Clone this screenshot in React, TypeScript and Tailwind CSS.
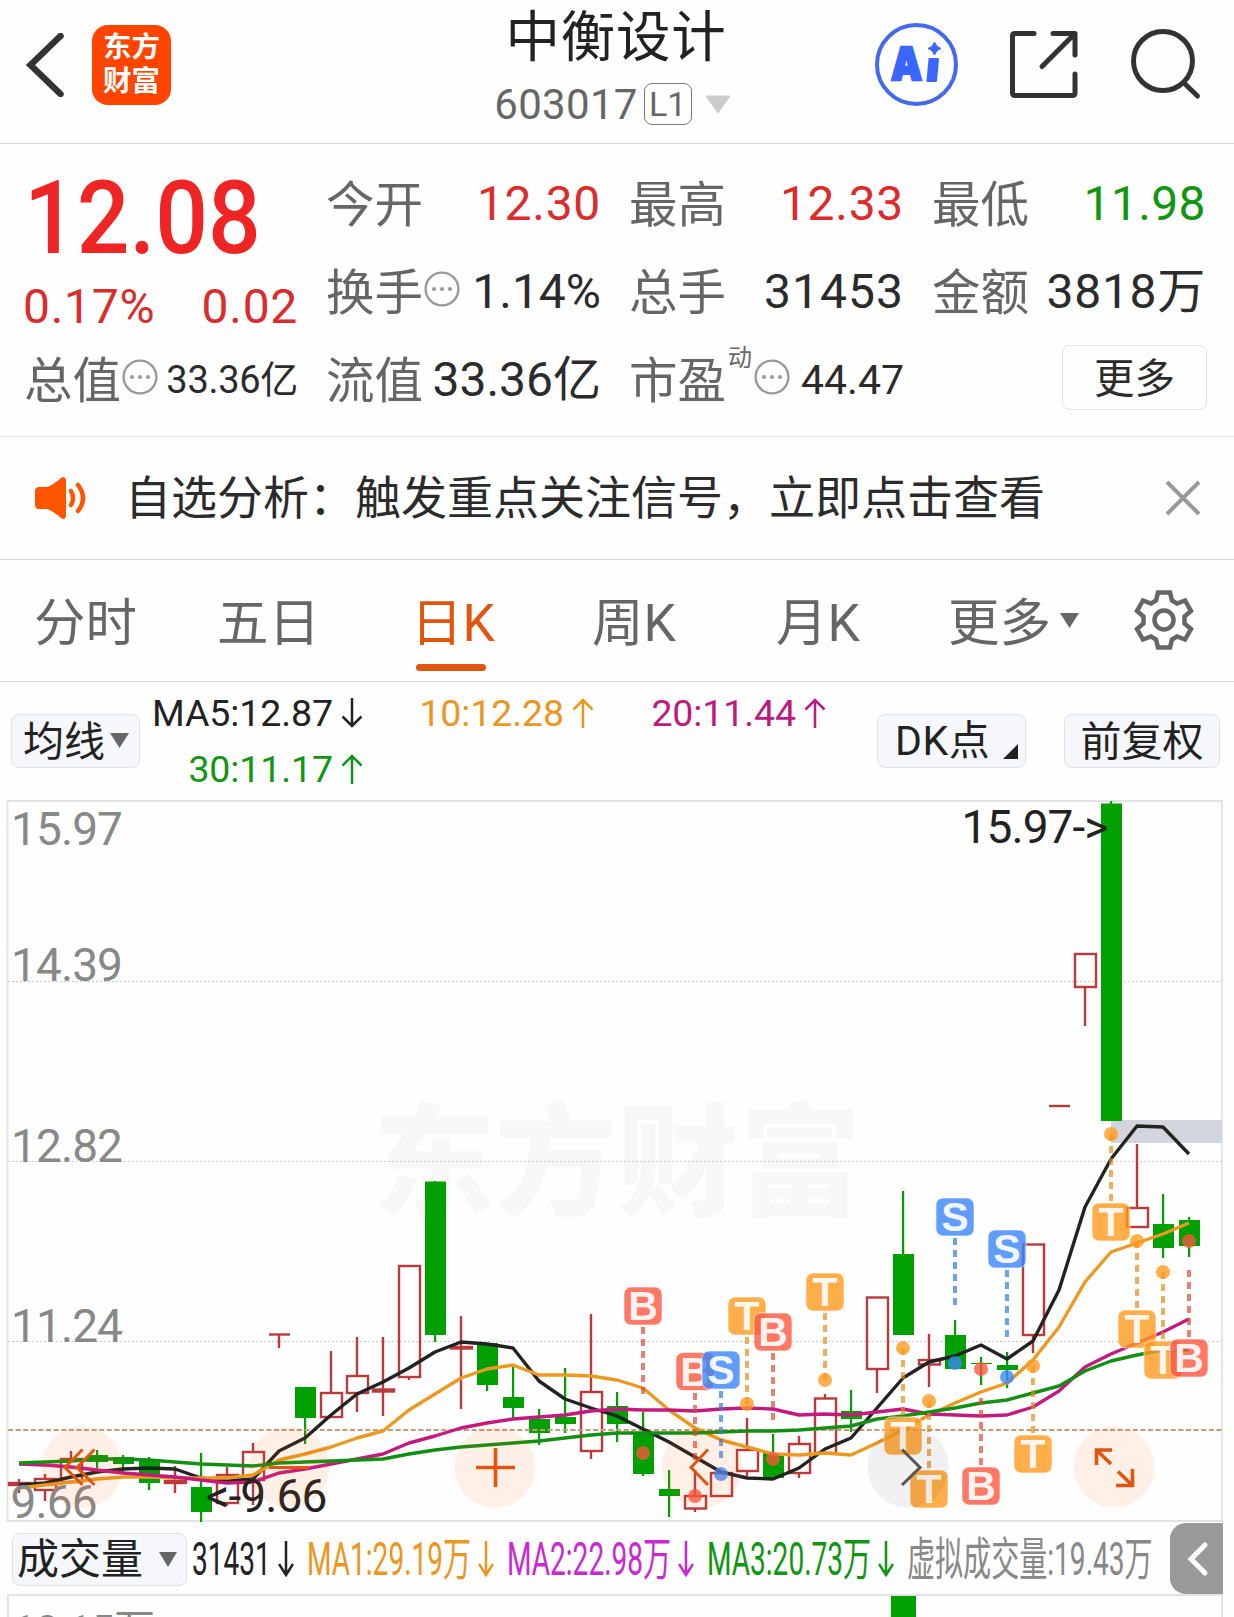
import { clsx } from 'clsx';

type Candle = [kind: 'up' | 'down', high: number, top: number, bottom: number, low: number];

// one entry per trading day, values are y positions on the chart canvas
const CANDLES: Candle[] = [
  ['up', 1479, 1483, 1485, 1493],
  ['up', 1474, 1479, 1490, 1501],
  ['up', 1451, 1459, 1482, 1482],
  ['down', 1450, 1455, 1462, 1468],
  ['down', 1455, 1457, 1464, 1472],
  ['down', 1457, 1459, 1483, 1490],
  ['up', 1466, 1481, 1483, 1493],
  ['down', 1453, 1487, 1512, 1522],
  ['up', 1467, 1475, 1503, 1506],
  ['up', 1443, 1452, 1480, 1505],
  ['up', 1334, 1334.5, 1334.5, 1348],
  ['down', 1387, 1387, 1418, 1444],
  ['up', 1351, 1393, 1417, 1417],
  ['up', 1337, 1376, 1393, 1412],
  ['up', 1337, 1389.5, 1391.5, 1416],
  ['up', 1266, 1266, 1377, 1380],
  ['down', 1181, 1181.5, 1335, 1342],
  ['up', 1316, 1347, 1348.5, 1409],
  ['down', 1343, 1343, 1385, 1391],
  ['down', 1365, 1397, 1408, 1418],
  ['down', 1409, 1419, 1433, 1445],
  ['down', 1368, 1417, 1424, 1433],
  ['up', 1314, 1392, 1451, 1459],
  ['down', 1392, 1406, 1424, 1442],
  ['down', 1412, 1433, 1474, 1476],
  ['down', 1470, 1489, 1496, 1517],
  ['up', 1470, 1496, 1508.5, 1512],
  ['up', 1473, 1473, 1496, 1496],
  ['up', 1418, 1450, 1471, 1476],
  ['down', 1434, 1453, 1478, 1478],
  ['up', 1436, 1444, 1473, 1478],
  ['up', 1394, 1398.5, 1453, 1453],
  ['down', 1390, 1411, 1419, 1432],
  ['up', 1297, 1297.5, 1369, 1393],
  ['down', 1191, 1254, 1335, 1335],
  ['up', 1334, 1360, 1364.5, 1387],
  ['down', 1320, 1335, 1369, 1369],
  ['down', 1357, 1363, 1364, 1385],
  ['down', 1352, 1365, 1370, 1388],
  ['up', 1244, 1244.5, 1335, 1353],
  ['up', 1106, 1106, 1106, 1106],
  ['up', 954, 954, 987, 1026],
  ['down', 801, 803.5, 1121, 1121],
  ['up', 1144, 1208, 1227, 1227],
  ['down', 1194, 1224, 1248, 1258],
  ['down', 1217, 1220, 1246, 1257],
];

const MA_LINES = [
  {
    color: '#222222',
    ys: [1485, 1483, 1477, 1472, 1469, 1468, 1469, 1478, 1481, 1479, 1451, 1438, 1415, 1394, 1382, 1368, 1352, 1342, 1344, 1348, 1381, 1399, 1408, 1416, 1429, 1442, 1457, 1472, 1478, 1479, 1468, 1449, 1438, 1408, 1378, 1362, 1356, 1345, 1359, 1341, 1290, 1207, 1159, 1126, 1127, 1154],
  },
  {
    color: '#ec991f',
    ys: [1488, 1485, 1482, 1479, 1477, 1477, 1478, 1478, 1478, 1475, 1460, 1454, 1447, 1438, 1431, 1410, 1394, 1378, 1369, 1365, 1375, 1375, 1376, 1380, 1388, 1410, 1428, 1440, 1447, 1454, 1455, 1453, 1455, 1443, 1430, 1415, 1403, 1392, 1383, 1360, 1327, 1282, 1252, 1243, 1234, 1223],
  },
  {
    color: '#c41a80',
    ys: [1464, 1465, 1467, 1470, 1473, 1475, 1477, 1480, 1483, 1482, 1473, 1469, 1464, 1459, 1454, 1443, 1436, 1428, 1423, 1419, 1417, 1415, 1411, 1409, 1410, 1410, 1411, 1409, 1408, 1409, 1415, 1414, 1415, 1412, 1409, 1414, 1415, 1416, 1415, 1407, 1391, 1367, 1354, 1343, 1332, 1319],
  },
  {
    color: '#139013',
    ys: [1463, 1462, 1461, 1459, 1459, 1460, 1462, 1464, 1465, 1466, 1463, 1462, 1461, 1460, 1459, 1454, 1450, 1447, 1445, 1443, 1441, 1438, 1435, 1433, 1433, 1433, 1433, 1432, 1431, 1431, 1430, 1428, 1426, 1419, 1416, 1412, 1408, 1403, 1400, 1393, 1386, 1371, 1361, 1355, 1350, 1350],
  },
];

type Mark = { i: number; kind: 'T' | 'B' | 'S'; badge: number; from: number; dot: number };

const MARKS: Mark[] = [
  { i: 24, kind: 'B', badge: 1306, from: 1327, dot: 1453 },
  { i: 26, kind: 'B', badge: 1371.5, from: 1393, dot: 1496 },
  { i: 27, kind: 'S', badge: 1370, from: 1391, dot: 1474 },
  { i: 28, kind: 'T', badge: 1316, from: 1337, dot: 1404 },
  { i: 29, kind: 'B', badge: 1332, from: 1353, dot: 1459 },
  { i: 31, kind: 'T', badge: 1292, from: 1313, dot: 1380 },
  { i: 34, kind: 'T', badge: 1436, from: 1348, dot: 1348 },
  { i: 35, kind: 'T', badge: 1489, from: 1401, dot: 1401 },
  { i: 36, kind: 'S', badge: 1217, from: 1238, dot: 1363 },
  { i: 37, kind: 'B', badge: 1486, from: 1398, dot: 1369 },
  { i: 38, kind: 'S', badge: 1249, from: 1270, dot: 1377 },
  { i: 39, kind: 'T', badge: 1454, from: 1366, dot: 1366 },
  { i: 42, kind: 'T', badge: 1222, from: 1134, dot: 1134 },
  { i: 43, kind: 'T', badge: 1329, from: 1241, dot: 1241 },
  { i: 44, kind: 'T', badge: 1360, from: 1272, dot: 1272 },
  { i: 45, kind: 'B', badge: 1358, from: 1270, dot: 1241 },
];

const MARK_COLOR = { T: '#ff9a1c', B: '#fd563f', S: '#3a86fb' };
const MARK_DASH = { T: '#e08a10', B: '#d94430', S: '#2a78d8' };

const dayX = (i: number) => 19 + 26 * i;

function Header() {
  return (
    <header className="flex h-[144px] border-b border-[#d6d6d6]">
      <div className="flex w-[400px] items-start pl-6 pt-[25px]">
        <svg className="mt-2 h-16 w-11" viewBox="24 33 44 64" fill="none" stroke="#333" strokeWidth="6.5">
          <path d="M60.5 36 L30.5 65 L60.5 94" strokeLinecap="round" />
        </svg>
        <div className="ml-6 flex h-20 w-[79px] flex-col items-center justify-center rounded-2xl bg-[#ff4400] text-[28.5px] font-bold leading-[34px] text-white">
          <span>东方</span>
          <span>财富</span>
        </div>
      </div>
      <div className="flex flex-1 flex-col items-center">
        <h1 className="mr-0.5 mt-[5px] text-[54.5px] leading-[64px] tracking-[0.8px] text-[#222]">中衡设计</h1>
        <div className="mr-[9px] mt-[10px] flex h-[50px] items-center text-[#666]">
          <span className="text-[42px] tracking-[0.3px]">603017</span>
          <span className="ml-1.5 flex h-[42px] w-[48px] items-center justify-center rounded-lg border-[1.5px] border-[#777] text-[34px]">
            L1
          </span>
          <svg className="ml-[13px] h-[19px] w-[26px]" viewBox="0 0 26 19">
            <path d="M1 1 H25 L13 18 Z" fill="#ccc" stroke="#ccc" strokeLinejoin="round" />
          </svg>
        </div>
      </div>
      <svg className="h-[130px] w-[400px]" viewBox="834 0 400 130" fill="none">
        <circle cx="916.5" cy="64.5" r="39.5" stroke="#4468ee" strokeWidth="4" />
        <text x="891" y="79.5" className="font-[Inter] text-[46px] font-black" fill="#3a66ff" stroke="#3a66ff" strokeWidth="2.5" textLength="31" lengthAdjust="spacingAndGlyphs">
          A
        </text>
        <path d="M929.5 59 H938 L936 81 H927.5 Z" fill="#3a66ff" stroke="#3a66ff" strokeWidth="2" strokeLinejoin="round" />
        <path d="M934.5 42 Q936 47 941 48.5 Q936 50 934.5 55 Q933 50 928 48.5 Q933 47 934.5 42Z" fill="#3a66ff" stroke="#3a66ff" />
        <g stroke="#333" strokeWidth="5" strokeLinecap="round" strokeLinejoin="round">
          <path d="M1034 33.5 H1015 Q1012.5 33.5 1012.5 36 V93 Q1012.5 95.5 1015 95.5 H1072 Q1075 95.5 1075 93 V74" />
          <path d="M1053 33.5 H1075 V55 M1074 34.5 L1042 66.5" />
          <circle cx="1163" cy="61" r="29.5" />
          <path d="M1184 83 L1197.5 96" />
        </g>
      </svg>
    </header>
  );
}

function Dots() {
  return (
    <svg className="h-[36px] w-[36px] shrink-0" viewBox="0 0 36 36" fill="#999">
      <circle cx="18" cy="18" r="16.4" fill="none" stroke="#999" strokeWidth="2.4" />
      <circle cx="10" cy="18" r="2.1" />
      <circle cx="18" cy="18" r="2.1" />
      <circle cx="26" cy="18" r="2.1" />
    </svg>
  );
}

type QuoteProps = { label: string; value: string; dots?: boolean; sup?: string; tone?: string; size?: string };

function Quote({ label, value, dots, sup, tone = 'text-[#2b2b2b]', size = 'text-[48px]' }: QuoteProps) {
  return (
    <div className="flex h-[88px] items-center whitespace-nowrap">
      <span className="mt-1 text-[48.5px] leading-none text-[#666]">{label}</span>
      {sup && <span className="mb-11 ml-0.5 text-2xl leading-none text-[#666]">{sup}</span>}
      {dots && <span className={clsx('mb-1.5', sup ? 'ml-0.5' : 'ml-px')}><Dots /></span>}
      <span className={clsx('ml-auto leading-none', tone, size)}>{value}</span>
    </div>
  );
}

function QuotePanel() {
  return (
    <section className="grid h-[293px] auto-rows-min grid-cols-[274px_275px_275px_273px] gap-x-7 border-b border-[#ebebeb] pl-6 pt-4">
      <div className="flex h-[176px] flex-col text-[#ef2424]">
        <div className="h-[112px] origin-left scale-x-[0.91] whitespace-nowrap text-[102px] font-medium leading-[117px]">12.08</div>
        <div className="flex justify-between text-[48px] leading-[69px] tracking-[0.7px] text-[#d92d2d]">
          <span className="-ml-px">0.17%</span>
          <span>0.02</span>
        </div>
      </div>
      <div>
        <Quote label="今开" value="12.30" tone="text-[#dd2b2b]" size="text-[48px] tracking-[0.7px]" />
        <Quote label="换手" value="1.14%" dots />
      </div>
      <div>
        <Quote label="最高" value="12.33" tone="text-[#dd2b2b]" size="text-[48px] tracking-[0.7px]" />
        <Quote label="总手" value="31453" size="text-[48px] tracking-[1px]" />
      </div>
      <div>
        <Quote label="最低" value="11.98" tone="text-[#109610]" size="-mr-px text-[48px] tracking-[0.4px]" />
        <Quote label="金额" value="3818万" size="-mr-px text-[48px] tracking-[0.7px]" />
      </div>
      <Quote label="总值" value="33.36亿" dots size="text-[38px] tracking-[-0.3px]" />
      <Quote label="流值" value="33.36亿" />
      <Quote label="市盈" value="44.47" sup="动" dots size="text-[41px]" />
      <div className="flex h-[88px] items-center justify-end">
        <button className="-mr-0.5 mb-1.5 h-[65px] w-[145px] rounded-lg border-[1.5px] border-[#dfe1e3] pt-1 text-[40.5px] leading-none text-[#2b2b2b]">更多</button>
      </div>
    </section>
  );
}

function Banner() {
  return (
    <section className="flex h-[123px] items-center border-b border-[#d6d6d6] pl-[34px] pr-[33px]">
      <svg className="h-11 w-[53px]" viewBox="0 0 53 44" fill="none" stroke="#ff5500" strokeLinecap="round">
        <path d="M4 11 H13 Q19 9 27 2 Q31 -1 32 4 V40 Q31 45 27 42 Q19 35 13 33 H4 Q1 32 1 29 V15 Q1 12 4 11Z" fill="#ff5500" stroke="none" />
        <path d="M37 15 Q41 22 37 29 M44 9 Q54 22 44 35" strokeWidth="4.5" />
      </svg>
      <span className="ml-[38px] mt-px whitespace-nowrap text-[46px] text-[#2b2b2b]">自选分析：触发重点关注信号，立即点击查看</span>
      <svg className="ml-auto h-9 w-9" viewBox="0 0 36 36" stroke="#999" strokeWidth="4">
        <path d="M2 2 L34 34 M34 2 L2 34" />
      </svg>
    </section>
  );
}

const TABS = [
  { name: '分时', box: 'w-[183px]' },
  { name: '五日', box: 'w-[194px]' },
  { name: '日K', box: 'w-[181px]', active: true },
  { name: '周K', box: 'w-[184px]' },
  { name: '月K', box: 'w-[172px]' },
];

function Tabs() {
  return (
    <nav className="flex h-[122px] items-center border-b border-[#d6d6d6] pl-[34px] text-[51.5px] text-[#666]">
      {TABS.map(tab => (
        <div key={tab.name} className={clsx('flex h-full flex-col whitespace-nowrap pt-[26px]', tab.box, tab.active && 'text-[#e0560f]')}>
          <span className="leading-[76px]">{tab.name}</span>
          {tab.active && <span className="ml-[5px] mt-0.5 h-[7px] w-[70px] rounded-full bg-[#e0560f]" />}
        </div>
      ))}
      <span className="mt-[7px] whitespace-nowrap">更多</span>
      <svg className="ml-[9px] h-[15px] w-[19px]" viewBox="0 0 19 15">
        <path d="M0 0 H19 L9.5 15 Z" fill="#666" />
      </svg>
      <svg className="-mt-px ml-[55px] h-[60px] w-[60px]" viewBox="-30 -30 60 60" fill="none" stroke="#666" strokeWidth="4.5">
        <circle r="9.5" />
        <path d="M-6 -27.5 H6 L8 -19.5 L13 -16.5 L21 -19.5 L27 -9 L20.5 -3.5 V3.5 L27 9 L21 19.5 L13 16.5 L8 19.5 L6 27.5 H-6 L-8 19.5 L-13 16.5 L-21 19.5 L-27 9 L-20.5 3.5 V-3.5 L-27 -9 L-21 -19.5 L-13 -16.5 L-8 -19.5 Z" />
      </svg>
    </nav>
  );
}

function Arrow({ up, narrow }: { up?: boolean; narrow?: boolean }) {
  return (
    <svg
      className={clsx('shrink-0', up && 'rotate-180', narrow ? 'h-9 w-4' : 'h-[30px] w-[22px]')}
      viewBox={narrow ? '0 0 16 36' : '0 0 22 30'}
      fill="none"
      stroke="currentColor"
      strokeWidth="2.5"
    >
      {narrow ? <path d="M8 0 V34 M1 23 L8 34 L15 23" /> : <path d="M11 0 V28 M1.5 18.5 L11 28 L20.5 18.5" />}
    </svg>
  );
}

function MaValue({ text, up, tone }: { text: string; up?: boolean; tone: string }) {
  return (
    <div className={clsx('flex h-14 items-center justify-end whitespace-nowrap text-[37.5px]', tone)}>
      <span className="mr-2 tracking-[-0.1px]">{text}</span>
      <Arrow up={up} />
    </div>
  );
}

function MaBar() {
  const chip = 'flex items-center rounded-lg border-[1.5px] border-[#dfe1e6] bg-[#f6f7fa] text-[41px] leading-none text-[#222] whitespace-nowrap';
  return (
    <section className="flex h-[118px] items-start pl-[11px]">
      <div className={clsx(chip, 'mt-[32px] h-[54px] w-[129px] pl-[11px]')}>
        <span className="mt-0.5">均线</span>
        <svg className="-mt-0.5 ml-[5px] h-[15px] w-[19px]" viewBox="0 0 19 15">
          <path d="M0 0 H19 L9.5 15 Z" fill="#666" />
        </svg>
      </div>
      <div className="grid grid-cols-[223px_231px_232px] pt-[3px]">
        <MaValue text="MA5:12.87" tone="text-[#222]" />
        <MaValue text="10:12.28" up tone="text-[#ea9620]" />
        <MaValue text="20:11.44" up tone="text-[#bd1a7e]" />
        <MaValue text="30:11.17" up tone="text-[#109610]" />
      </div>
      <div className={clsx(chip, 'ml-[51px] mt-8 h-[54px] w-[149px] justify-between pl-[17px] tracking-[0.6px]')}>
        DK点
        <svg className="mr-[7px] mt-[21px] h-[15px] w-[15px]" viewBox="0 0 15 15">
          <path d="M15 0 V15 H0 Z" fill="#222" />
        </svg>
      </div>
      <div className={clsx(chip, 'ml-[38px] mt-8 h-[54px] w-[156px] justify-center pt-0.5')}>前复权</div>
    </section>
  );
}

function CandleShape({ i, candle }: { i: number; candle: Candle }) {
  const [kind, high, top, bottom, low] = candle;
  const x = dayX(i);
  if (kind === 'down') {
    return (
      <g fill="#00a000">
        <rect x={x - 1} y={high} width="2.2" height={low - high} />
        <rect x={x - 10} y={top} width="21" height={bottom - top} />
      </g>
    );
  }
  // rising days are hollow, so the wick is drawn in two pieces
  return (
    <g stroke="#b93a38" strokeWidth="2.4" fill="none">
      {top > high && <path d={`M${x} ${high} V${top}`} />}
      {low > bottom && <path d={`M${x} ${bottom} V${low}`} />}
      {bottom > top ? <rect x={x - 10} y={top} width="21" height={bottom - top} /> : <path d={`M${x - 10} ${top} H${x + 11}`} />}
    </g>
  );
}

function MarkShape({ mark }: { mark: Mark }) {
  const x = dayX(mark.i);
  return (
    <g>
      <path d={`M${x} ${mark.from} V${mark.from + 67}`} stroke={MARK_DASH[mark.kind]} strokeOpacity="0.68" strokeWidth="4" strokeDasharray="7 5" />
      <circle cx={x} cy={mark.dot} r="7" fill={MARK_COLOR[mark.kind]} fillOpacity="0.78" />
      <rect x={x - 19} y={mark.badge - 19} width="38" height="38" rx="7" fill={MARK_COLOR[mark.kind]} fillOpacity="0.8" stroke="#fff" strokeOpacity="0.6" strokeWidth="1" />
      <text x={x} y={mark.badge + 14} textAnchor="middle" className="text-[41px] font-bold" fontFamily="Liberation Sans" fill="#fff" fillOpacity="0.92">
        {mark.kind}
      </text>
    </g>
  );
}

function KLineChart() {
  return (
    <svg className="block h-[723px] w-full" viewBox="0 800 1234 723" fill="none">
      <text x="373" y="1206" className="text-[122px] font-black" fill="#f7f7f7">东方财富</text>
      <g stroke="#c9c9c9" strokeWidth="1.2" strokeDasharray="2 2">
        <path d="M8 981.5 H1222 M8 1161.5 H1222 M8 1341.5 H1222" />
      </g>
      <path d="M7.5 1521 V801 H1222 V1521 Z" stroke="#e3e3e3" strokeWidth="1.8" />
      <rect x="1111" y="1120" width="111" height="23" fill="#d3d6dc" />

      {CANDLES.map((candle, i) => (
        <CandleShape key={i} i={i} candle={candle} />
      ))}
      <path d="M8 1430 H1222" stroke="#c59a78" strokeWidth="1.8" strokeDasharray="5 2.6" />
      {MA_LINES.map(line => (
        <polyline
          key={line.color}
          points={line.ys.map((y, i) => `${dayX(i)},${y}`).join(' ')}
          stroke={line.color}
          strokeWidth="3.4"
          strokeLinejoin="round"
        />
      ))}

      <g className="text-[46px] tracking-[-0.9px]" fill="#888">
        <text x="11" y="845">15.97</text>
        <text x="11" y="981">14.39</text>
        <text x="11" y="1162">12.82</text>
        <text x="11" y="1342">11.24</text>
        <text x="10.5" y="1518">9.66</text>
      </g>
      <g className="text-[46px] tracking-[-0.9px]" fill="#222">
        <text x="961.5" y="843">15.97-&gt;</text>
        <text x="206" y="1512">&lt;-9.66</text>
      </g>

      {MARKS.map(mark => (
        <MarkShape key={mark.i} mark={mark} />
      ))}

      {/* floating pan and zoom controls */}
      <g fill="#ff5a00" fillOpacity="0.09">
        <circle cx="82" cy="1467" r="40.5" />
        <circle cx="289" cy="1467" r="40.5" />
        <circle cx="495" cy="1467" r="40.5" />
        <circle cx="702" cy="1467" r="40.5" />
        <circle cx="908" cy="1467" r="40.5" fill="#000" fillOpacity="0.055" />
        <circle cx="1114" cy="1467" r="40.5" />
      </g>
      <g stroke="#e0560f" strokeWidth="3">
        <path d="M82.5 1449.5 L65 1467.5 L82.5 1485 M94.5 1449.5 L77 1467.5 L94.5 1485" />
        <path d="M269 1467.5 H308" />
        <path d="M476 1467.5 H515 M495.5 1448 V1487" strokeWidth="3.6" />
        <path d="M708 1449.5 L691 1467.5 L708 1485" />
        <path d="M902 1449.5 L920 1467.5 L902 1485" stroke="#555" />
        <path d="M1112 1450 H1096.5 V1465 M1097 1450.5 L1111 1464" strokeWidth="3.6" />
        <path d="M1116 1485.5 H1132.5 V1469 M1132 1485 L1118 1471.5" strokeWidth="3.6" />
      </g>
    </svg>
  );
}

function VolumeValue({ text, box, tone }: { text: string; box: string; tone: string }) {
  return (
    <div className={clsx('flex items-center', tone, box)}>
      <div className="flex-1">
        <span className="block w-0 origin-left scale-x-[0.61] whitespace-nowrap text-[46px] leading-[60px]">{text}</span>
      </div>
      <Arrow narrow />
    </div>
  );
}

function VolumeBar() {
  return (
    <section className="flex h-[71px] items-center pl-3">
      <div className="mt-px flex h-[53px] w-[175px] shrink-0 items-center rounded-lg border-[1.5px] border-[#dfe1e6] bg-[#f6f7fa] pl-1 text-[42px] leading-none text-[#222]">
        <span className="mt-0.5">成交量</span>
        <svg className="ml-4 h-[15px] w-[18px]" viewBox="0 0 18 15">
          <path d="M0 0 H18 L9 15 Z" fill="#666" />
        </svg>
      </div>
      <VolumeValue text="31431" box="ml-[5px] w-[102px]" tone="text-[#222]" />
      <VolumeValue text="MA1:29.19万" box="ml-[13px] w-[187px]" tone="text-[#ea9620]" />
      <VolumeValue text="MA2:22.98万" box="ml-[13px] w-[187px]" tone="text-[#c929cf]" />
      <VolumeValue text="MA3:20.73万" box="ml-[13px] w-[187px]" tone="text-[#109610]" />
      <div className="ml-[13px] w-[263px] text-[#888]">
        <span className="block w-0 origin-left scale-x-[0.61] whitespace-nowrap text-[46px] leading-[60px]">虚拟成交量:19.43万</span>
      </div>
      <div className="flex h-[71px] w-[53px] shrink-0 items-center justify-center rounded-l-2xl bg-[#999]">
        <svg className="ml-0.5 h-9 w-6" viewBox="0 0 24 36" fill="none" stroke="#fff" strokeWidth="5" strokeLinecap="round">
          <path d="M19 4 L5 18 L19 32" />
        </svg>
      </div>
    </section>
  );
}

function VolumeChart() {
  return (
    <section className="ml-[7px] h-[24px] w-[1216px] overflow-hidden border-2 border-b-0 border-[#e3e3e3]">
      <div className="flex items-start">
        <span className="mt-[3px] w-[882px] whitespace-nowrap pl-1 text-[41px] leading-[62px] tracking-[-0.4px] text-[#888]">18.15万</span>
        <span className="h-6 w-[25px] bg-[#00a000]" />
      </div>
    </section>
  );
}

export default function App() {
  return (
    <div className="h-[1617px] w-[1234px] overflow-hidden bg-[#fefefe] font-[Roboto,'Noto_Sans_CJK_SC',sans-serif]">
      <Header />
      <QuotePanel />
      <Banner />
      <Tabs />
      <MaBar />
      <KLineChart />
      <VolumeBar />
      <VolumeChart />
    </div>
  );
}
